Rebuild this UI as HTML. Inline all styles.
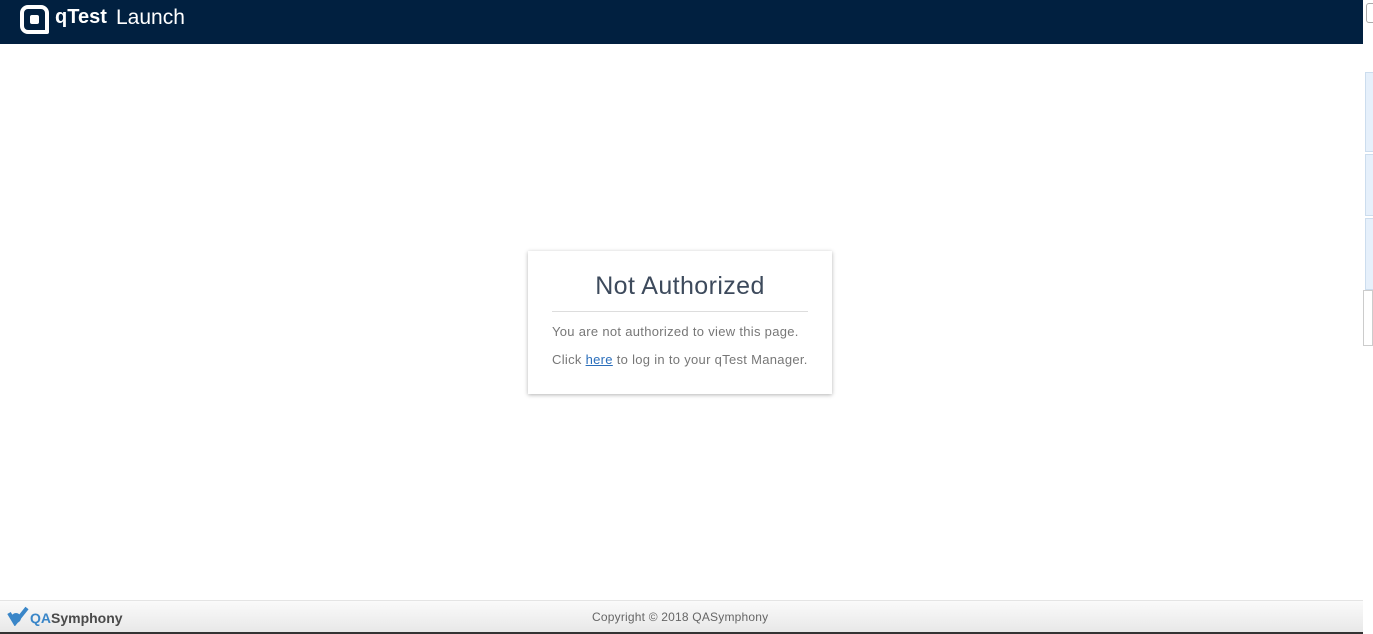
<!DOCTYPE html>
<html><head><meta charset="utf-8"><style>
*{margin:0;padding:0;box-sizing:border-box}
body{width:1373px;height:634px;overflow:hidden;background:#fff;font-family:"Liberation Sans",sans-serif;position:relative}
.hdr{position:absolute;left:0;top:0;width:1363px;height:44px;background:#012040}
.logo{position:absolute;left:20px;top:5px;width:29px;height:29px;border:4px solid #fff;border-radius:8px;border-bottom-right-radius:2px}
.logo i{position:absolute;left:6px;top:6px;width:9px;height:9px;background:#fff;border-radius:2px}
.qt{position:absolute;left:55px;top:6px;color:#fff;font-weight:bold;font-size:20px}
.la{position:absolute;left:116px;top:6px;color:#fff;font-size:21px}
.side{position:absolute;left:1363px;top:0;width:10px;height:634px;background:#fff}
.card{position:absolute;left:528px;top:251px;width:304px;height:143px;background:#fff;box-shadow:0 1px 4px rgba(0,0,0,.3)}
.card h1{font-weight:normal;font-size:25px;letter-spacing:0.4px;color:#3d4a5c;text-align:center;padding-top:21px;height:60px}
.card hr{border:0;border-top:1px solid #ddd;margin:0 24px}
.card p{font-size:13px;letter-spacing:0.3px;color:#777;margin:12px 24px 0;line-height:16px;white-space:nowrap}
.card a{color:#2a6ebb;text-decoration:underline}
.ftr{position:absolute;left:0;top:600px;width:1363px;height:32px;background:linear-gradient(#fafafa,#e8e8e8);border-top:1px solid #e4e4e4}
.ftr .c{position:absolute;left:592px;top:9px;font-size:12px;letter-spacing:0.2px;color:#666}
.ftr .q{position:absolute;left:30px;top:9px;font-size:14px;font-weight:bold;color:#4a4a4a}
.bl{position:absolute;left:0;top:632px;width:1363px;height:2px;background:#333}
</style></head><body>
<div class="hdr"><div class="logo"><i></i></div><div class="qt">qTest</div><div class="la">Launch</div></div>
<div class="side">
<div style="position:absolute;left:3px;top:3px;width:10px;height:20px;border:1px solid #aaa;border-radius:3px"></div>
<div style="position:absolute;left:2px;top:72px;width:10px;height:80px;background:#e6f0fb;border:1px solid #cde"></div>
<div style="position:absolute;left:2px;top:154px;width:10px;height:62px;background:#e6f0fb;border:1px solid #cde"></div>
<div style="position:absolute;left:2px;top:218px;width:10px;height:72px;background:#e6f0fb;border:1px solid #cde"></div>
<div style="position:absolute;left:0;top:290px;width:10px;height:56px;border:1px solid #ccc"></div>
</div>
<div class="card"><h1>Not Authorized</h1><hr><p>You are not authorized to view this page.</p><p>Click <a>here</a> to log in to your qTest Manager.</p></div>
<div class="ftr">
<svg style="position:absolute;left:7px;top:5px" width="22" height="20" viewBox="0 0 22 20"><path d="M2 7 L8 17 L20 2" stroke="#3a86c8" stroke-width="4" fill="none"/><circle cx="9" cy="12" r="5" fill="#3a86c8"/></svg>
<div class="q"><span style="color:#3a86c8">QA</span>Symphony</div>
<div class="c">Copyright © 2018 QASymphony</div></div>
<div class="bl"></div>
</body></html>
